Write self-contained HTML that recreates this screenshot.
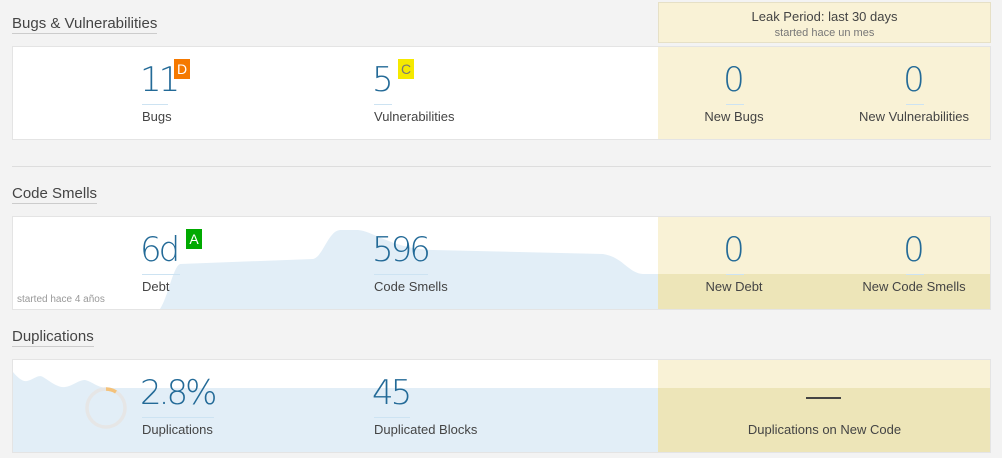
<!DOCTYPE html><html><head><style>
body{margin:0;width:1002px;height:458px;background:#f3f3f3;font-family:"Liberation Sans",sans-serif;position:relative;overflow:hidden}
.a{position:absolute}
.h{font-size:15px;color:#444;border-bottom:1px solid #ccc;line-height:18px}
.box{position:absolute;left:12px;width:977px;height:92px;background:#fff;border:1px solid #e4e4e4;overflow:hidden}
.num{position:absolute;font-family:"DejaVu Sans ExtraLight","DejaVu Sans","Liberation Sans",sans-serif;font-weight:200;font-size:34px;color:#236a97;line-height:36px;letter-spacing:-3px}
.ul{position:absolute;height:1px;background:#cde3f2}
.lb{position:absolute;font-size:13px;color:#444;white-space:nowrap}
.rt{position:absolute;width:16px;height:20px;font-size:14px;color:#fff;text-align:center;line-height:20px}
.leak{position:absolute;left:645px;top:0;width:333px;height:92px;background:#f9f2d6}
.c{text-align:center;width:160px;letter-spacing:0}
</style></head><body>
<div class="a h" style="left:12px;top:15px">Bugs &amp; Vulnerabilities</div>
<div class="a" style="left:658px;top:2px;width:331px;height:39px;background:#f9f2d6;border:1px solid #e6e0c6;text-align:center">
<div style="font-size:13px;color:#444;margin-top:6px">Leak Period: last 30 days</div>
<div style="font-size:11px;color:#777;margin-top:3px">started hace un mes</div></div>
<div class="box" style="top:46px">
<div class="leak"></div>
<div class="num" style="left:127px;top:15px">11</div><div class="ul" style="left:129px;top:57px;width:26px"></div>
<div class="rt" style="left:161px;top:12px;background:#f57900">D</div>
<div class="lb" style="left:129px;top:62px">Bugs</div>
<div class="num" style="left:359px;top:15px">5</div><div class="ul" style="left:361px;top:57px;width:18px"></div>
<div class="rt" style="left:385px;top:12px;background:#f5e900;color:#777">C</div>
<div class="lb" style="left:361px;top:62px">Vulnerabilities</div>
<div class="num c" style="left:641px;top:15px">0</div><div class="ul" style="left:713px;top:57px;width:18px"></div>
<div class="lb c" style="left:641px;top:62px">New Bugs</div>
<div class="num c" style="left:821px;top:15px">0</div><div class="ul" style="left:893px;top:57px;width:18px"></div>
<div class="lb c" style="left:821px;top:62px">New Vulnerabilities</div>
</div>
<div class="a" style="left:12px;top:166px;width:979px;height:1px;background:#ddd"></div>
<div class="a h" style="left:12px;top:185px">Code Smells</div>
<div class="box" style="top:216px">
<svg class="a" style="left:0;top:0" width="977" height="92"><path d="M147 92 C155 80 160 50 167 47 L300 42 C310 40 315 14 327 13 L345 13 C360 14 380 32 420 33 L590 37 C610 40 615 56 630 57 L977 57 L977 92Z" fill="#e2eef7"/></svg>
<div class="leak" style="background:transparent"><div style="height:57px;background:#f9f2d6"></div><div style="height:35px;background:#ede5b8"></div></div>
<div class="lb" style="left:4px;top:77px;font-size:10px;color:#999">started hace 4 años</div>
<div class="num" style="left:127px;top:15px">6d</div><div class="ul" style="left:129px;top:57px;width:38px"></div>
<div class="rt" style="left:173px;top:12px;background:#00aa00">A</div>
<div class="lb" style="left:129px;top:62px">Debt</div>
<div class="num" style="left:359px;top:15px">596</div><div class="ul" style="left:361px;top:57px;width:54px"></div>
<div class="lb" style="left:361px;top:62px">Code Smells</div>
<div class="num c" style="left:641px;top:15px">0</div><div class="ul" style="left:713px;top:57px;width:18px"></div>
<div class="lb c" style="left:641px;top:62px">New Debt</div>
<div class="num c" style="left:821px;top:15px">0</div><div class="ul" style="left:893px;top:57px;width:18px"></div>
<div class="lb c" style="left:821px;top:62px">New Code Smells</div>
</div>
<div class="a h" style="left:12px;top:328px">Duplications</div>
<div class="box" style="top:359px">
<svg class="a" style="left:0;top:0" width="977" height="92"><path d="M0 12 C5 18 10 22 14 21 C20 20 25 14 30 17 C38 22 45 28 52 27 C60 26 65 20 72 20 C80 22 85 28 95 28 L977 28 L977 92 L0 92Z" fill="#e2eef7"/>
<circle cx="93" cy="48" r="19" fill="none" stroke="#e6e6e6" stroke-width="3.5"/>
<path d="M93 29 A19 19 0 0 1 103 32" fill="none" stroke="#f4c27a" stroke-width="3.5"/></svg>
<div class="leak" style="background:transparent"><div style="height:28px;background:#f9f2d6"></div><div style="height:64px;background:#ede5b8"></div></div>
<div class="num" style="left:127px;top:15px">2.8%</div><div class="ul" style="left:129px;top:57px;width:72px"></div>
<div class="lb" style="left:129px;top:62px">Duplications</div>
<div class="num" style="left:359px;top:15px">45</div><div class="ul" style="left:361px;top:57px;width:36px"></div>
<div class="lb" style="left:361px;top:62px">Duplicated Blocks</div>
<div class="a" style="left:793px;top:37px;width:35px;height:2px;background:#444"></div>
<div class="lb" style="left:645px;top:62px;width:333px;text-align:center">Duplications on New Code</div>
</div>
</body></html>
